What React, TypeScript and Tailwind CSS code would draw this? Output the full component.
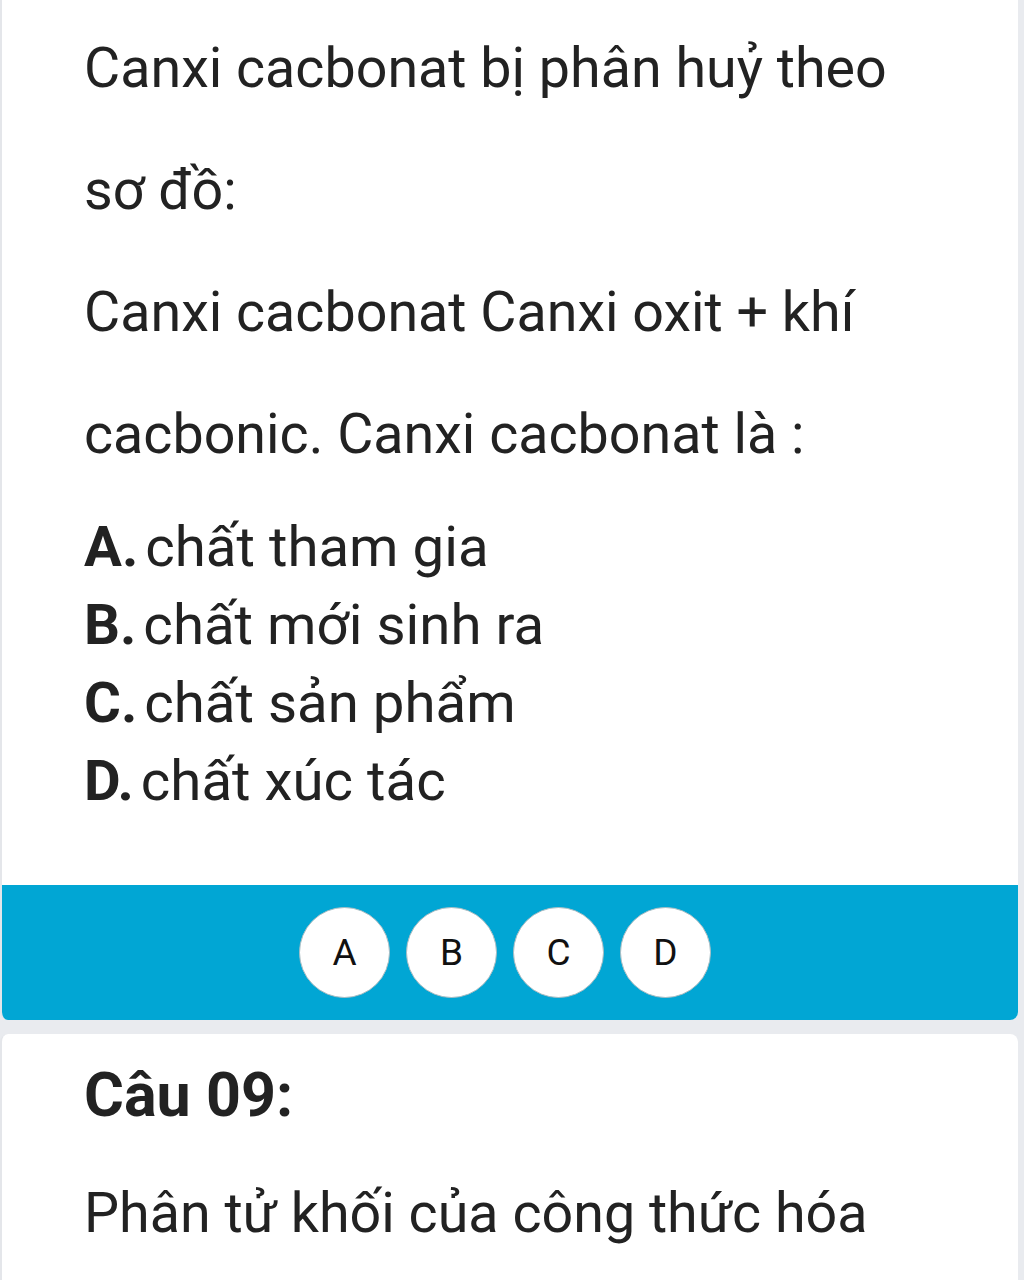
const OPTIONS = [
  { key: 'A', text: 'chất tham gia' },
  { key: 'B', text: 'chất mới sinh ra' },
  { key: 'C', text: 'chất sản phẩm' },
  { key: 'D', text: 'chất xúc tác' },
]

export default function App() {
  return (
    <div
      className="min-h-screen bg-[#e9ebef] pr-[6px] text-[#222222]"
      style={{ fontFamily: 'Roboto, "Noto Sans", sans-serif' }}
    >
      {/* Question card */}
      <div className="bg-white border-l-2 border-[#e4e6ea] rounded-b-[8px] overflow-hidden">
        <div className="pl-[82px] pr-[60px] pt-[7px] pb-[65px]">
          <p className="text-[55.6px] leading-[122px]">
            Canxi cacbonat bị phân huỷ theo
            <br />
            sơ đồ:
            <br />
            Canxi cacbonat Canxi oxit + khí
            <br />
            cacbonic. Canxi cacbonat là :
          </p>

          <div className="mt-[13px] flex flex-col">
            {OPTIONS.map((o) => (
              <div key={o.key} className="text-[56.4px] leading-[78px] whitespace-nowrap">
                <span className="font-bold">{o.key}.</span>
                <span className="ml-[7px]">{o.text}</span>
              </div>
            ))}
          </div>
        </div>

        {/* Answer bar */}
        <div className="h-[135px] bg-[#01a6d4] flex items-center justify-center gap-[16px] pr-[10px]">
          {OPTIONS.map((o) => (
            <div
              key={o.key}
              className="w-[91px] h-[91px] rounded-full bg-white border border-[#a9bcc2] flex items-center justify-center text-[37px] text-[#111111]"
            >
              {o.key}
            </div>
          ))}
        </div>
      </div>

      {/* Next question */}
      <div className="mt-[14px] bg-white border-l-2 border-[#e4e6ea] rounded-t-[8px] pl-[82px] pr-[60px] pt-[21px] pb-[40px]">
        <p className="text-[61px] leading-[80px] font-bold">Câu 09:</p>
        <p className="mt-[17px] text-[55.6px] leading-[122px]">Phân tử khối của công thức hóa</p>
      </div>
    </div>
  )
}
